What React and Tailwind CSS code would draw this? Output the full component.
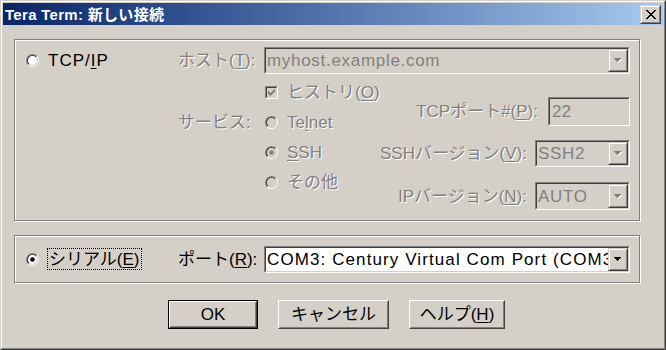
import React from "react";

const DIS = "text-[#808080] [text-shadow:1px_1px_0_#ffffff]";

function Radio({ checked, disabled }) {
  const fill = disabled ? "#d4d0c8" : "#ffffff";
  const dot = disabled ? "#808080" : "#000000";
  return (
    <svg width="13" height="13" viewBox="0 0 13 13" className="shrink-0 block">
      <path d="M2.26 10.74 A6 6 0 0 1 10.74 2.26" fill="none" stroke="#808080" strokeWidth="1.2" />
      <path d="M10.74 2.26 A6 6 0 0 1 2.26 10.74" fill="none" stroke="#ffffff" strokeWidth="1.2" />
      <path d="M2.96 10.04 A5 5 0 0 1 10.04 2.96" fill="none" stroke="#404040" strokeWidth="1.2" />
      <path d="M10.04 2.96 A5 5 0 0 1 2.96 10.04" fill="none" stroke="#d4d0c8" strokeWidth="1.2" />
      <circle cx="6.5" cy="6.5" r="4.4" fill={fill} />
      {checked && <circle cx="6.5" cy="6.5" r="2.3" fill={dot} />}
    </svg>
  );
}

function Checkbox() {
  const tops = [2, 3, 4, 3, 2, 1, 0];
  return (
    <div className="w-[13px] h-[13px] shrink-0 border border-t-[#808080] border-l-[#808080] border-b-white border-r-white">
      <div className="w-full h-full border border-t-[#404040] border-l-[#404040] border-b-[#d4d0c8] border-r-[#d4d0c8] bg-[#d4d0c8] flex items-center justify-center">
        <svg width="7" height="7" viewBox="0 0 7 7" shapeRendering="crispEdges" className="block">
          {tops.map((t, i) => (
            <rect key={i} x={i} y={t} width="1" height="3" fill="#808080" />
          ))}
        </svg>
      </div>
    </div>
  );
}

function Sunken({ className = "", bg = "bg-[#d4d0c8]", children }) {
  return (
    <div className={`shrink-0 border border-t-[#808080] border-l-[#808080] border-b-white border-r-white ${className}`}>
      <div className={`w-full h-full border border-t-[#404040] border-l-[#404040] border-b-[#d4d0c8] border-r-[#d4d0c8] flex items-stretch overflow-hidden ${bg}`}>
        {children}
      </div>
    </div>
  );
}

function Arrow({ disabled }) {
  const rows = [
    [0, 7],
    [1, 5],
    [2, 3],
    [3, 1],
  ];
  return (
    <svg width="8" height="5" viewBox="0 0 8 5" shapeRendering="crispEdges" className="block">
      {disabled &&
        rows.map(([x, w], i) => (
          <rect key={"s" + i} x={x + 1} y={i + 1} width={w} height="1" fill="#ffffff" />
        ))}
      {rows.map(([x, w], i) => (
        <rect key={i} x={x} y={i} width={w} height="1" fill={disabled ? "#808080" : "#000000"} />
      ))}
    </svg>
  );
}

function Raised({ className = "", children }) {
  return (
    <div className={`shrink-0 border border-t-[#d4d0c8] border-l-[#d4d0c8] border-b-[#404040] border-r-[#404040] ${className}`}>
      <div className="w-full h-full border border-t-white border-l-white border-b-[#808080] border-r-[#808080] bg-[#d4d0c8] flex items-center justify-center">
        {children}
      </div>
    </div>
  );
}

function Combo({ width, height, text, disabled, white, track = "tracking-[0.7px]" }) {
  return (
    <Sunken className={`${width} ${height}`} bg={white ? "bg-white" : "bg-[#d4d0c8]"}>
      <div
        className={`flex-1 min-w-0 flex items-center pl-[1px] whitespace-nowrap overflow-hidden ${track} ${
          disabled ? "text-[#808080]" : "text-black"
        }`}
      >
        {text}
      </div>
      <Raised className="w-[20px] h-full">
        <Arrow disabled={disabled} />
      </Raised>
    </Sunken>
  );
}

function CloseGlyph() {
  const rects = [];
  for (let i = 0; i < 9; i++) {
    const d = i <= 4 ? i : 8 - i;
    rects.push(<rect key={"a" + i} x={d} y={i} width="2" height="1" fill="#000" />);
    rects.push(<rect key={"b" + i} x={8 - d} y={i} width="2" height="1" fill="#000" />);
  }
  return (
    <svg width="10" height="9" viewBox="0 0 10 9" shapeRendering="crispEdges" className="block">
      {rects}
    </svg>
  );
}

function PushButton({ width, children, isDefault }) {
  const inner = (
    <div className="w-full h-full border border-t-white border-l-white border-b-[#404040] border-r-[#404040]">
      <div className="w-full h-full border border-t-[#d4d0c8] border-l-[#d4d0c8] border-b-[#808080] border-r-[#808080] flex items-center justify-center">
        {children}
      </div>
    </div>
  );
  return (
    <div className={`${width} h-[29px] shrink-0 ${isDefault ? "border border-black" : ""}`}>{inner}</div>
  );
}

const U = ({ children }) => <span className="underline underline-offset-[2px]">{children}</span>;

export default function App() {
  return (
    <div className="w-[666px] h-[350px] bg-[#d4d0c8] border border-t-[#d4d0c8] border-l-[#d4d0c8] border-b-[#404040] border-r-[#404040] [font-family:'Liberation_Sans','Noto_Sans_CJK_JP',sans-serif] text-[17px] leading-none text-black select-none">
      <div className="w-full h-full border border-t-white border-l-white border-b-[#808080] border-r-[#808080] p-px flex flex-col">
        {/* Title bar */}
        <div className="h-[22px] shrink-0 bg-linear-to-r from-[#0a246a] to-[#a6caf0] flex items-center justify-between pl-[2px] pr-[2px]">
          <span className="text-white font-bold text-[15px] tracking-[0.3px] whitespace-nowrap">Tera Term: 新しい接続</span>
          <Raised className="w-[21px] h-[19px]">
            <CloseGlyph />
          </Raised>
        </div>

        {/* Group 1 */}
        <div className="ml-[11px] mt-[14px] w-[626px] h-[182px] shrink-0 border border-[#808080] shadow-[1px_1px_0_#ffffff,inset_1px_1px_0_#ffffff]">
          <div className="mt-[7px] h-[27px] flex items-center">
            <div className="w-[163px] pl-[11px] flex items-center gap-[9px]">
              <Radio />
              <span className="tracking-[1px]">
                TCP/<U>I</U>P
              </span>
            </div>
            <div className={`w-[86px] whitespace-nowrap ${DIS}`}>
              ホスト(<U>T</U>):
            </div>
            <Combo width="w-[366px]" height="h-[27px]" text="myhost.example.com" disabled />
          </div>

          <div className="mt-[3px] flex">
            <div className="w-[163px]" />
            <div className="w-[86px] flex flex-col">
              <div className="h-[30px]" />
              <div className={`h-[30px] flex items-center whitespace-nowrap ${DIS}`}>サービス:</div>
            </div>
            <div className="w-[366px] flex">
              <div className="w-[120px] pl-[1px] flex flex-col">
                <div className="h-[30px] flex items-center gap-[9px]">
                  <Checkbox />
                  <span className={`whitespace-nowrap ${DIS}`}>
                    ヒストリ(<U>O</U>)
                  </span>
                </div>
                <div className="h-[30px] flex items-center gap-[9px]">
                  <Radio disabled />
                  <span className={DIS}>
                    Te<U>l</U>net
                  </span>
                </div>
                <div className="h-[30px] flex items-center gap-[9px]">
                  <Radio disabled checked />
                  <span className={DIS}>
                    <U>S</U>SH
                  </span>
                </div>
                <div className="h-[30px] flex items-center gap-[9px]">
                  <Radio disabled />
                  <span className={DIS}>その他</span>
                </div>
              </div>
              <div className="flex-1 flex flex-col items-end">
                <div className="mt-[20px] flex items-center gap-[10px]">
                  <span className={`whitespace-nowrap ${DIS}`}>
                    TCPポート#(<U>P</U>):
                  </span>
                  <Sunken className="w-[82px] h-[29px]">
                    <div className="flex items-center pl-[2px] text-[#808080]">22</div>
                  </Sunken>
                </div>
                <div className="mt-[14px] flex items-center gap-[8px]">
                  <span className={`whitespace-nowrap ${DIS}`}>
                    SSHバージョン(<U>V</U>):
                  </span>
                  <Combo width="w-[95px]" height="h-[27px]" text="SSH2" disabled />
                </div>
                <div className="mt-[15px] flex items-center gap-[8px]">
                  <span className={`whitespace-nowrap ${DIS}`}>
                    IPバージョン(<U>N</U>):
                  </span>
                  <Combo width="w-[95px]" height="h-[28px]" text="AUTO" disabled />
                </div>
              </div>
            </div>
          </div>
        </div>

        {/* Group 2 */}
        <div className="ml-[11px] mt-[14px] w-[626px] h-[48px] shrink-0 border border-[#808080] shadow-[1px_1px_0_#ffffff,inset_1px_1px_0_#ffffff] flex items-center">
          <div className="w-[163px] pl-[11px] flex items-center gap-[8px]">
            <Radio checked />
            <span className="border border-dotted border-black px-[1px] h-[22px] flex items-center whitespace-nowrap">
              シリアル(<U>E</U>)
            </span>
          </div>
          <div className="w-[86px] whitespace-nowrap">
            ポート(<U>R</U>):
          </div>
          <Combo
            width="w-[366px]"
            height="h-[27px]"
            text="COM3: Century Virtual Com Port (COM3)"
            white
            track="tracking-[1.1px]"
          />
        </div>

        {/* Buttons */}
        <div className="mt-[17px] ml-[165px] flex gap-[20px]">
          <PushButton width="w-[90px]" isDefault>
            OK
          </PushButton>
          <PushButton width="w-[111px]">キャンセル</PushButton>
          <PushButton width="w-[96px]">
            ヘルプ(<U>H</U>)
          </PushButton>
        </div>
      </div>
    </div>
  );
}
